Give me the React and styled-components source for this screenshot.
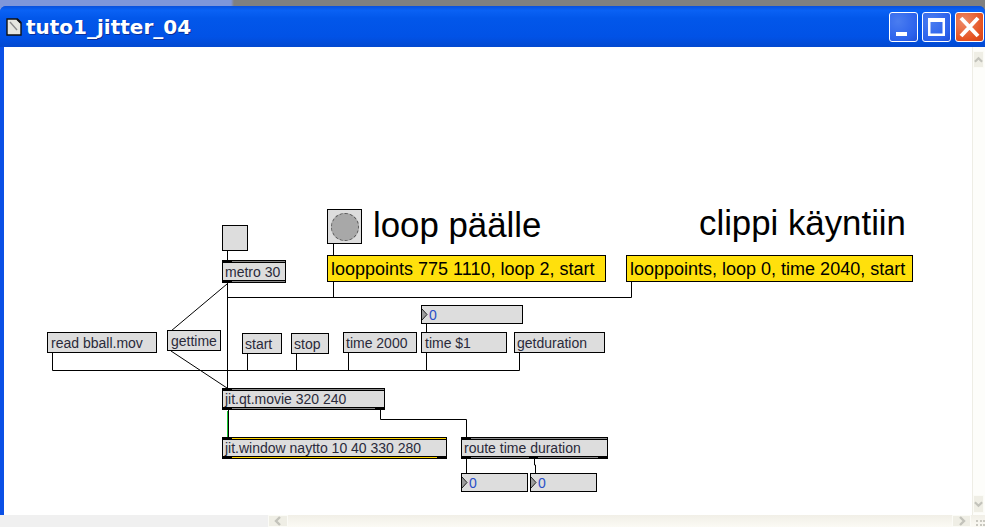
import React from "react"
import styled, { createGlobalStyle } from "styled-components"

const GlobalStyle = createGlobalStyle`
    html, body {
        margin: 0;
        padding: 0;
        background: #fff;
        overflow: hidden;
    }
`

const Screen = styled.div`
    width: 985px;
    height: 527px;
    display: flex;
    flex-direction: column;
    overflow: hidden;
    background: linear-gradient(to right, #7f96da 0, #7f96da 231px, #808080 234px);
`

const Frame = styled.div`
    margin-top: 6px;
    flex: 1;
    display: flex;
    flex-direction: column;
    min-height: 0;
    background: #0a50e6;
    border-radius: 6px 6px 0 0;
    padding-left: 4px;
`

const TitleBar = styled.div`
    height: 41px;
    margin-left: -4px;
    padding: 0 1px 0 6px;
    display: flex;
    align-items: center;
    gap: 4px;
    border-radius: 6px 6px 0 0;
    background: linear-gradient(to bottom, #0a50dc 0, #0a62f5 10%, #0257ea 30%, #0152e6 75%, #0349d0 100%);
`

const Title = styled.div`
    flex: 1;
    font: bold 20px "DejaVu Sans", sans-serif;
    color: #fff;
    text-shadow: 1px 1px 0 #0a2f9a;
`

const WinButton = styled.div`
    width: 29px;
    height: 30px;
    box-sizing: border-box;
    border: 1px solid #fff;
    border-radius: 3px;
    display: flex;
    background: ${(p) =>
        p.$close
            ? "radial-gradient(circle at 30% 30%, #ee8a68, #e4511f 70%, #d0431a)"
            : "radial-gradient(circle at 30% 30%, #4a7df0, #2c62ec 70%, #1f4fd8)"};
`

const Body = styled.div`
    flex: 1;
    display: flex;
    min-height: 0;
    background: #fff;
`

const Canvas = styled.div`
    position: relative;
    flex: 1;
    background: #fff;
`

const VScroll = styled.div`
    width: 12px;
    display: flex;
    flex-direction: column;
    justify-content: space-between;
    padding: 4px 0 2px;
    background: #fdfdfa;
    border-left: 1px solid #eeede5;
`

const HScroll = styled.div`
    height: 12px;
    margin-left: -4px;
    display: flex;
    align-items: stretch;
    background: linear-gradient(to bottom, #f1efe7, #fbfaf4);
`

const HScrollFill = styled.div`
    width: 268px;
    background: #f0f0f0;
`

const HScrollTrack = styled.div`
    flex: 1;
`

const ScrollButton = styled.div`
    width: ${(p) => p.$w}px;
    height: ${(p) => p.$h}px;
    flex: none;
    display: flex;
    align-items: center;
    justify-content: center;
    background: #efeee5;
    border: 1px solid #fbfbf6;
    box-sizing: border-box;
`

const Grip = styled.svg`
    width: 14px;
    height: 12px;
    flex: none;
`

const Cords = styled.svg`
    position: absolute;
    left: -4px;
    top: -47px;
    width: 985px;
    height: 527px;
    pointer-events: none;
`

// every patcher box sits at its screen coordinate, minus the canvas origin
const Node = styled.div`
    position: absolute;
    left: ${(p) => p.$x - 4}px;
    top: ${(p) => p.$y - 47}px;
    width: ${(p) => p.$w}px;
    height: ${(p) => p.$h}px;
    box-sizing: border-box;
    border: 1px solid #000;
    background: #dddddd;
`

const MessageBox = styled(Node)`
    display: flex;
    align-items: center;
    padding-left: ${(p) => p.$pad || 3}px;
    font: 14px/1 "Liberation Sans", Arial, sans-serif;
    color: #2a2a3a;
    white-space: nowrap;
`

const YellowMessage = styled(MessageBox)`
    background: #ffe00c;
    color: #000;
    font-size: 18px;
`

const ObjectBox = styled(MessageBox)`
    padding-left: 2px;
`

const Rail = styled.i`
    position: absolute;
    left: 0;
    right: 0;
    height: 1px;
    background: ${(p) => p.$color || "#8a8a8a"};
    ${(p) => (p.$bottom ? "bottom: 0; border-top: 1px solid #000;" : "top: 0; border-bottom: 1px solid #000;")}
`

const Port = styled.i`
    position: absolute;
    left: ${(p) => p.$x}px;
    width: ${(p) => p.$w || 9}px;
    height: 3px;
    background: #000;
    ${(p) => (p.$bottom ? "bottom: -1px;" : "top: -1px;")}
`

const NumberBox = styled(Node)`
    display: flex;
    align-items: center;
    padding-left: 7px;
    font: 14px/1 "Liberation Sans", Arial, sans-serif;
    color: #2a4fc8;
`

const NumberArrow = styled.svg`
    position: absolute;
    left: 0;
    top: 2px;
    width: 6px;
    height: 13px;
`

const Bang = styled(Node)``

const Toggle = styled(Node)`
    display: flex;
    align-items: center;
    justify-content: center;
`

const ToggleDisc = styled.div`
    width: 28px;
    height: 28px;
    box-sizing: border-box;
    border-radius: 50%;
    background: #a8a8a8;
    border: 1px dashed #5a5a5a;
`

const Label = styled.div`
    position: absolute;
    left: ${(p) => p.$x - 4}px;
    top: ${(p) => p.$y - 47}px;
    font: 34.8px/1 "Liberation Sans", Arial, sans-serif;
    color: #000;
    white-space: nowrap;
`

const messages = [
    { text: "read bball.mov", x: 47, y: 332, w: 110, h: 21 },
    { text: "gettime", x: 167, y: 330, w: 54, h: 21 },
    { text: "start", x: 242, y: 333, w: 40, h: 21, pad: 2 },
    { text: "stop", x: 291, y: 333, w: 38, h: 21, pad: 2 },
    { text: "time 2000", x: 343, y: 332, w: 74, h: 21, pad: 2 },
    { text: "time $1", x: 421, y: 332, w: 86, h: 21 },
    { text: "getduration", x: 514, y: 332, w: 91, h: 21, pad: 2 },
]

const objects = [
    { text: "metro 30", x: 222, y: 260, w: 64, h: 23, ports: [{ x: 0 }], outs: [{ x: 0 }] },
    { text: "jit.qt.movie 320 240", x: 222, y: 388, w: 163, h: 22, ports: [{ x: 0 }], outs: [{ x: 0 }, { x: 152 }] },
    { text: "jit.window naytto 10 40 330 280", x: 222, y: 437, w: 225, h: 22, ports: [{ x: 0 }], outs: [{ x: 0 }, { x: 214 }], rail: "#ffd400" },
    { text: "route time duration", x: 461, y: 437, w: 147, h: 22, ports: [{ x: 0 }], outs: [{ x: 0 }, { x: 67 }, { x: 136 }] },
]

const numbers = [
    { x: 421, y: 305, w: 102, h: 19 },
    { x: 461, y: 473, w: 67, h: 19 },
    { x: 530, y: 473, w: 67, h: 19 },
]

const cords = [
    "M227.5 251V260",
    "M333.5 244V255",
    "M333.5 282V297.5",
    "M227.5 297.5H631.5V282",
    "M227.5 283V389",
    "M227 284L171 331",
    "M171 351L227 388",
    "M52.5 353V370.5H519.5V353",
    "M247.5 354V370",
    "M296.5 354V370",
    "M348.5 353V370",
    "M426.5 324V332",
    "M426.5 353V370",
    "M228.5 410V437",
    "M380.5 410V419.5H466.5V437",
    "M466.5 459V473",
    "M534.5 459V465H535.5V473",
]

const Chevron = ({ d }) => (
    <svg width="10" height="10" viewBox="0 0 10 10">
        <path d={d} fill="none" stroke="#c3c3bb" strokeWidth="2.4" />
    </svg>
)

const App = () => {
    return (
        <Screen>
            <GlobalStyle />
            <Frame>
                <TitleBar>
                    <svg width="16" height="18" viewBox="0 0 16 18">
                        <path d="M1 1H11L15 5V17H1Z" fill="#e6e6e0" stroke="#111" strokeWidth="1.4" />
                        <path d="M4 4L11 12" stroke="#8a8a8a" strokeWidth="1.4" />
                        <path d="M11 1L15 5" stroke="#111" strokeWidth="2" />
                    </svg>
                    <Title>tuto1_jitter_04</Title>
                    <WinButton>
                        <svg width="27" height="28" viewBox="0 0 27 28">
                            <rect x="6" y="19" width="11" height="4" fill="#fff" />
                        </svg>
                    </WinButton>
                    <WinButton>
                        <svg width="27" height="28" viewBox="0 0 27 28">
                            <path d="M5 5H22V23H5Z M7.5 9V20.5H19.5V9Z" fill="#fff" fillRule="evenodd" />
                        </svg>
                    </WinButton>
                    <WinButton $close>
                        <svg width="27" height="28" viewBox="0 0 27 28">
                            <path d="M5 5L22 23M22 5L5 23" stroke="#fff" strokeWidth="4" />
                        </svg>
                    </WinButton>
                </TitleBar>
                <Body>
                    <Canvas>
                        <Cords viewBox="0 0 985 527">
                            {cords.map((d) => (
                                <path key={d} d={d} fill="none" stroke="#000" strokeWidth="1" />
                            ))}
                            <path d="M227.5 411V437" stroke="#19c832" strokeWidth="1" />
                        </Cords>

                        <Bang $x={222} $y={225} $w={26} $h={26} />
                        <Toggle $x={327} $y={209} $w={35} $h={35}>
                            <ToggleDisc />
                        </Toggle>

                        <Label $x={373} $y={208}>loop päälle</Label>
                        <Label $x={699} $y={206}>clippi käyntiin</Label>

                        <YellowMessage $x={327} $y={255} $w={279} $h={27}>
                            looppoints 775 1110, loop 2, start
                        </YellowMessage>
                        <YellowMessage $x={626} $y={255} $w={287} $h={27}>
                            looppoints, loop 0, time 2040, start
                        </YellowMessage>

                        {messages.map((m) => (
                            <MessageBox key={m.text} $x={m.x} $y={m.y} $w={m.w} $h={m.h} $pad={m.pad}>
                                {m.text}
                            </MessageBox>
                        ))}

                        {objects.map((o) => (
                            <ObjectBox key={o.text} $x={o.x} $y={o.y} $w={o.w} $h={o.h}>
                                <Rail $color={o.rail} />
                                <Rail $bottom $color={o.rail} />
                                {o.ports.map((p) => (
                                    <Port key={p.x} $x={p.x} />
                                ))}
                                {o.outs.map((p) => (
                                    <Port key={p.x} $x={p.x} $bottom />
                                ))}
                                {o.text}
                            </ObjectBox>
                        ))}

                        {numbers.map((n) => (
                            <NumberBox key={n.x + "-" + n.y} $x={n.x} $y={n.y} $w={n.w} $h={n.h}>
                                <NumberArrow viewBox="0 0 6 13">
                                    <path d="M0 1L5 6.5L0 12" fill="#9a9a9a" stroke="#222" strokeWidth="1" />
                                </NumberArrow>
                                0
                            </NumberBox>
                        ))}
                    </Canvas>
                    <VScroll>
                        <ScrollButton $w={11} $h={17}>
                            <Chevron d="M1 7L5 3L9 7" />
                        </ScrollButton>
                        <ScrollButton $w={11} $h={18}>
                            <Chevron d="M1 3L5 7L9 3" />
                        </ScrollButton>
                    </VScroll>
                </Body>
                <HScroll>
                    <HScrollFill />
                    <ScrollButton $w={20} $h={12}>
                        <Chevron d="M7 1L3 5L7 9" />
                    </ScrollButton>
                    <HScrollTrack />
                    <ScrollButton $w={19} $h={12}>
                        <Chevron d="M3 1L7 5L3 9" />
                    </ScrollButton>
                    <Grip viewBox="0 0 14 12">
                        <path d="M5 5h2v2H5zM9 5h2v2H9zM5 9h2v2H5zM9 9h2v2H9zM12 5h2v2h-2zM12 9h2v2h-2z" fill="#c9c8c0" />
                    </Grip>
                </HScroll>
            </Frame>
        </Screen>
    )
}

export default App
